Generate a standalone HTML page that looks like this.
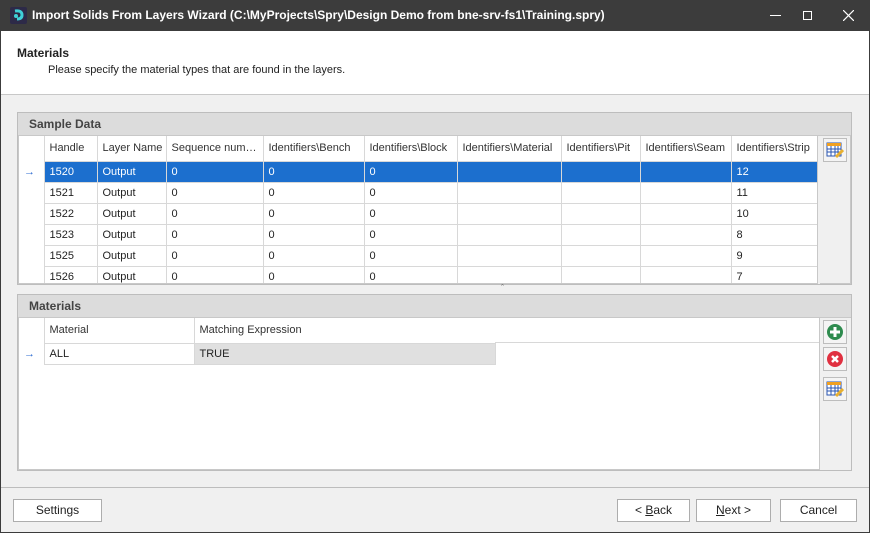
<!DOCTYPE html>
<html><head><style>
*{box-sizing:border-box;margin:0;padding:0}
body{width:870px;height:533px;overflow:hidden;font-family:"Liberation Sans",sans-serif;font-size:12px;color:#222;background:#f0f0f0;position:relative}
.a{position:absolute}
.win{left:0;top:0;width:870px;height:533px;border:1px solid #3c3c3c;border-top:none}
.title{left:0;top:0;width:870px;height:31px;background:#3c3c3c;color:#fff;font-weight:bold;font-size:12px;line-height:31px;padding-left:32px}
.hdr{left:1px;top:31px;width:868px;height:64px;background:#fff;border-bottom:1px solid #c8c8c8}
.grp{border:1px solid #bdbdbd;background:#f0f0f0}
.gh{background:#dcdcdc;font-weight:bold;color:#444;font-size:12px;line-height:22px;padding-left:11px;border-bottom:1px solid #c8c8c8}
.grid{background:#fff;border:1px solid #c8c8c8;overflow:hidden}
table{border-collapse:collapse;table-layout:fixed;font-size:11px}
td{border-right:1px solid #d8d8d8;border-bottom:1px solid #d8d8d8;height:21px;padding-left:5px;white-space:nowrap;overflow:hidden;text-overflow:ellipsis}
tr.h td{background:#fff;height:25px;color:#333}
tr.sel td{background:#1c6fce;color:#fff}
tr td:first-child{background:#fff;color:#2a6ad0;border-bottom:none;padding-left:5px}
.btn{border:1px solid #adadad;background:#fff;text-align:center;line-height:21px;font-size:12px;height:23px}
.ib{width:24px;height:24px;border:1px solid #bdbdbd;background:#f4f4f4;display:flex;align-items:center;justify-content:center}
</style></head><body>
<div class="a win"></div>
<div class="a title">Import Solids From Layers Wizard (C:\MyProjects\Spry\Design Demo from bne-srv-fs1\Training.spry)</div>
<svg class="a" style="left:10px;top:7px" width="17" height="17"><rect width="17" height="17" rx="2" fill="#2d2a48"/><path d="M5 4 Q12 3 12 8 Q12 12 7 12" stroke="#3fd0d8" stroke-width="3" fill="none"/><circle cx="6" cy="9" r="2" fill="#3fd0d8"/></svg>
<div class="a" style="left:770px;top:15px;width:11px;height:1px;background:#fff"></div>
<div class="a" style="left:803px;top:11px;width:9px;height:9px;border:1px solid #fff"></div>
<svg class="a" style="left:843px;top:10px" width="11" height="11"><path d="M0 0L11 11M11 0L0 11" stroke="#fff" stroke-width="1.2"/></svg>
<div class="a hdr"></div>
<div class="a" style="left:17px;top:46px;font-weight:bold">Materials</div>
<div class="a" style="left:48px;top:64px;font-size:11px">Please specify the material types that are found in the layers.</div>

<div class="a grp" style="left:17px;top:112px;width:835px;height:173px"><div class="gh">Sample Data</div></div>
<div class="a grid" style="left:18px;top:135px;width:800px;height:149px">
<table style="width:800px"><colgroup><col style="width:25px"><col style="width:53px"><col style="width:69px"><col style="width:97px"><col style="width:101px"><col style="width:93px"><col style="width:104px"><col style="width:79px"><col style="width:91px"><col style="width:88px"></colgroup>
<tr class="h"><td></td><td>Handle</td><td>Layer Name</td><td>Sequence numb…</td><td>Identifiers\Bench</td><td>Identifiers\Block</td><td>Identifiers\Material</td><td>Identifiers\Pit</td><td>Identifiers\Seam</td><td>Identifiers\Strip</td></tr>
<tr class="sel"><td style="background:#fff;color:#2a6ad0">&#8594;</td><td>1520</td><td>Output</td><td>0</td><td>0</td><td>0</td><td></td><td></td><td></td><td>12</td></tr>
<tr><td></td><td>1521</td><td>Output</td><td>0</td><td>0</td><td>0</td><td></td><td></td><td></td><td>11</td></tr>
<tr><td></td><td>1522</td><td>Output</td><td>0</td><td>0</td><td>0</td><td></td><td></td><td></td><td>10</td></tr>
<tr><td></td><td>1523</td><td>Output</td><td>0</td><td>0</td><td>0</td><td></td><td></td><td></td><td>8</td></tr>
<tr><td></td><td>1525</td><td>Output</td><td>0</td><td>0</td><td>0</td><td></td><td></td><td></td><td>9</td></tr>
<tr><td></td><td>1526</td><td>Output</td><td>0</td><td>0</td><td>0</td><td></td><td></td><td></td><td>7</td></tr>
</table></div>
<div class="a" style="left:820px;top:135px;width:31px;height:149px;border:1px solid #c8c8c8;border-left:none"></div>
<div class="a ib" style="left:823px;top:138px">
<svg width="18" height="18"><rect x="1" y="2" width="14" height="13" fill="#fff" stroke="#2a55b0"/><rect x="1" y="2" width="14" height="3" fill="#f0a020"/><path d="M1 8H15M1 11H15M5 5V15M9 5V15M12 5V15" stroke="#2a55b0"/><path d="M10 16L17 9" stroke="#e8b030" stroke-width="3"/></svg></div>

<div class="a" style="left:501px;top:283px;font-size:9px;color:#666">&#710;</div>

<div class="a grp" style="left:17px;top:294px;width:835px;height:177px"><div class="gh">Materials</div></div>
<div class="a grid" style="left:18px;top:317px;width:802px;height:153px">
<table style="width:476px"><colgroup><col style="width:25px"><col style="width:150px"><col style="width:301px"></colgroup>
<tr class="h"><td></td><td>Material</td><td>Matching Expression</td></tr>
<tr><td>&#8594;</td><td>ALL</td><td style="background:#e0e0e0">TRUE</td></tr>
</table>
<div class="a" style="left:476px;top:0;width:326px;height:25px;background:#fff;border-bottom:1px solid #d8d8d8"></div>
</div>
<div class="a ib" style="left:823px;top:320px"><svg width="18" height="18"><circle cx="9" cy="9" r="8" fill="#2e8b4e"/><path d="M9 4V14M4 9H14" stroke="#fff" stroke-width="3"/></svg></div>
<div class="a ib" style="left:823px;top:347px"><svg width="18" height="18"><circle cx="9" cy="9" r="8" fill="#e03040"/><path d="M6 6L12 12M12 6L6 12" stroke="#fff" stroke-width="2.5"/></svg></div>
<div class="a ib" style="left:823px;top:377px"><svg width="18" height="18"><rect x="1" y="2" width="14" height="13" fill="#fff" stroke="#2a55b0"/><rect x="1" y="2" width="14" height="3" fill="#f0a020"/><path d="M1 8H15M1 11H15M5 5V15M9 5V15M12 5V15" stroke="#2a55b0"/><path d="M10 16L17 9" stroke="#e8b030" stroke-width="3"/></svg></div>

<div class="a" style="left:1px;top:487px;width:868px;height:1px;background:#bdbdbd"></div>
<div class="a btn" style="left:13px;top:499px;width:89px">Settings</div>
<div class="a btn" style="left:617px;top:499px;width:73px">&lt; <u>B</u>ack</div>
<div class="a btn" style="left:696px;top:499px;width:75px"><u>N</u>ext &gt;</div>
<div class="a btn" style="left:780px;top:499px;width:77px">Cancel</div>
</body></html>
